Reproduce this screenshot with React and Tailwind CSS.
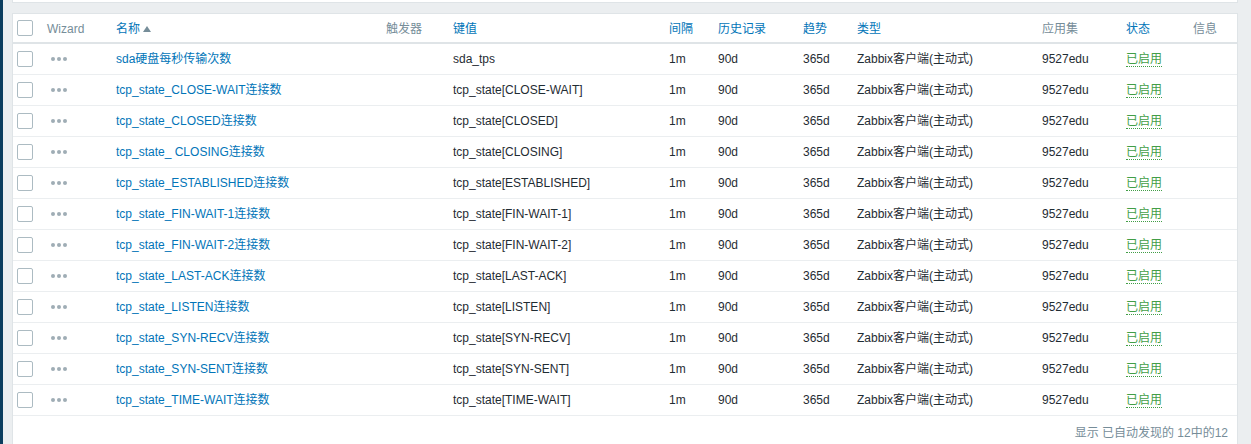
import React from 'react';

const rows = [
  ['sda硬盘每秒传输次数', 'sda_tps'],
  ['tcp_state_CLOSE-WAIT连接数', 'tcp_state[CLOSE-WAIT]'],
  ['tcp_state_CLOSED连接数', 'tcp_state[CLOSED]'],
  ['tcp_state_ CLOSING连接数', 'tcp_state[CLOSING]'],
  ['tcp_state_ESTABLISHED连接数', 'tcp_state[ESTABLISHED]'],
  ['tcp_state_FIN-WAIT-1连接数', 'tcp_state[FIN-WAIT-1]'],
  ['tcp_state_FIN-WAIT-2连接数', 'tcp_state[FIN-WAIT-2]'],
  ['tcp_state_LAST-ACK连接数', 'tcp_state[LAST-ACK]'],
  ['tcp_state_LISTEN连接数', 'tcp_state[LISTEN]'],
  ['tcp_state_SYN-RECV连接数', 'tcp_state[SYN-RECV]'],
  ['tcp_state_SYN-SENT连接数', 'tcp_state[SYN-SENT]'],
  ['tcp_state_TIME-WAIT连接数', 'tcp_state[TIME-WAIT]'],
];

const Checkbox = () => (
  <span className="block w-4 h-4 rounded-[2px] border border-[#acbbc2] bg-white" />
);

const Dots = () => (
  <span className="flex gap-[2px] pl-[4px]">
    <span className="w-1 h-1 rounded-full bg-[#9fadb5]" />
    <span className="w-1 h-1 rounded-full bg-[#9fadb5]" />
    <span className="w-1 h-1 rounded-full bg-[#9fadb5]" />
  </span>
);

export default function App() {
  return (
    <div
      className="flex h-[444px] bg-[#ebeef0] text-[12px] text-[#1f2c33] overflow-hidden"
      style={{ fontFamily: '"Liberation Sans", Arial, "Noto Sans CJK SC", sans-serif' }}
    >
      {/* sidebar edge */}
      <div className="w-[3px] shrink-0 bg-[#0b3d5e]" />

      <div className="ml-[9px] w-[1226px] flex flex-col">
        {/* bottom of the filter panel above */}
        <div className="h-[3px] bg-white border-x border-b border-[#dfe4e7]" />

        <div className="mt-[10px] flex-1 bg-white border-x border-t border-[#dfe4e7] flex flex-col">
          <table className="table-fixed border-collapse w-[1224px]">
            <colgroup>
              <col className="w-[29px]" />
              <col className="w-[69px]" />
              <col className="w-[270px]" />
              <col className="w-[67px]" />
              <col className="w-[216px]" />
              <col className="w-[49px]" />
              <col className="w-[85px]" />
              <col className="w-[54px]" />
              <col className="w-[185px]" />
              <col className="w-[84px]" />
              <col className="w-[67px]" />
              <col className="w-[49px]" />
            </colgroup>
            <thead>
              <tr className="h-[29px] border-b-2 border-[#dfe4e7] text-left font-normal">
                <th className="pl-[4px] font-normal"><Checkbox /></th>
                <th className="pl-[5px] pt-[2px] font-normal text-[#768d99]">Wizard</th>
                <th className="pl-[5px] pt-[2px] font-normal text-[#0275b8]">
                  <span className="inline-flex items-center gap-[3px]">
                    名称
                    <svg width="8" height="6" viewBox="0 0 8 6">
                      <path d="M0 6 L4 0 L8 6 Z" fill="#768d99" />
                    </svg>
                  </span>
                </th>
                <th className="pl-[5px] pt-[2px] font-normal text-[#768d99]">触发器</th>
                <th className="pl-[5px] pt-[2px] font-normal text-[#0275b8]">键值</th>
                <th className="pl-[5px] pt-[2px] font-normal text-[#0275b8]">间隔</th>
                <th className="pl-[5px] pt-[2px] font-normal text-[#0275b8]">历史记录</th>
                <th className="pl-[5px] pt-[2px] font-normal text-[#0275b8]">趋势</th>
                <th className="pl-[5px] pt-[2px] font-normal text-[#0275b8]">类型</th>
                <th className="pl-[5px] pt-[2px] font-normal text-[#768d99]">应用集</th>
                <th className="pl-[5px] pt-[2px] font-normal text-[#0275b8]">状态</th>
                <th className="pl-[5px] pt-[2px] font-normal text-[#768d99]">信息</th>
              </tr>
            </thead>
            <tbody>
              {rows.map(([name, key]) => (
                <tr key={key} className="h-[31px] border-b border-[#ebeef0]">
                  <td className="pl-[4px]"><Checkbox /></td>
                  <td className="pl-[5px]"><Dots /></td>
                  <td className="pl-[5px] text-[#0275b8] whitespace-nowrap">{name}</td>
                  <td className="pl-[5px]" />
                  <td className="pl-[5px] whitespace-nowrap">{key}</td>
                  <td className="pl-[5px]">1m</td>
                  <td className="pl-[5px]">90d</td>
                  <td className="pl-[5px]">365d</td>
                  <td className="pl-[5px] whitespace-nowrap">Zabbix客户端(主动式)</td>
                  <td className="pl-[5px]">9527edu</td>
                  <td className="pl-[5px]">
                    <span className="text-[#429e47] border-b border-dotted border-[#429e47]">已启用</span>
                  </td>
                  <td className="pl-[5px]" />
                </tr>
              ))}
            </tbody>
          </table>
          <div className="flex justify-end pr-[9px] pt-[8px] text-[#768d99]">
            显示 已自动发现的 12中的12
          </div>
        </div>
      </div>
    </div>
  );
}
